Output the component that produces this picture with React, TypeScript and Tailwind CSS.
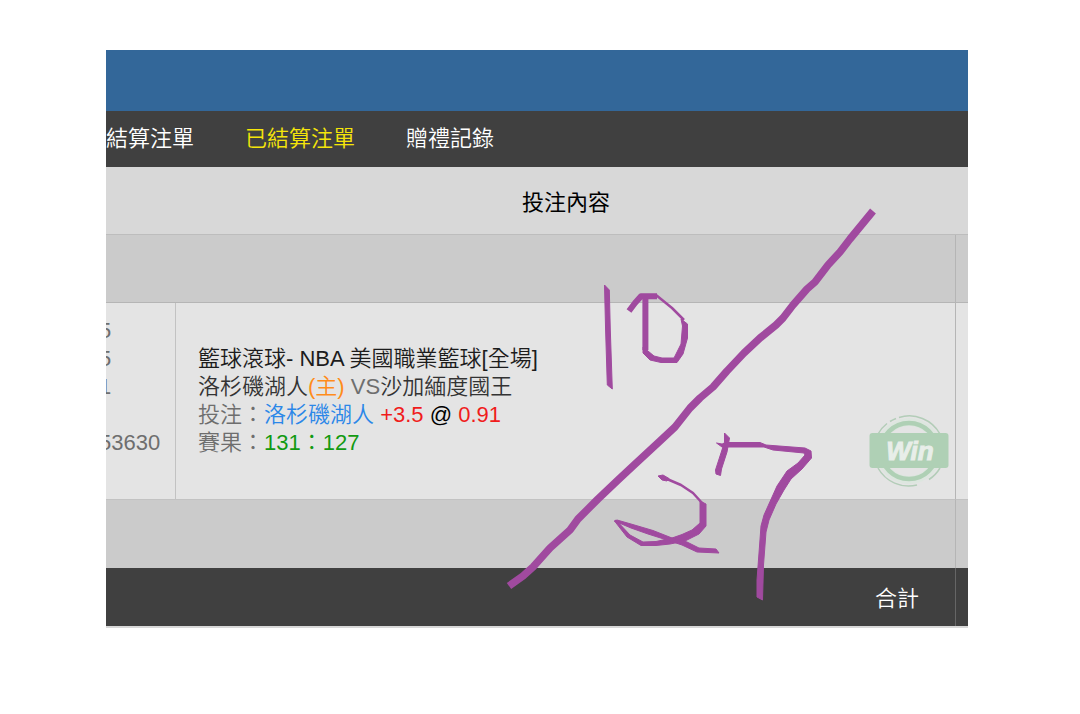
const tabs = [
  { label: "結算注單", active: false },
  { label: "已結算注單", active: true },
  { label: "贈禮記錄", active: false },
];

const orderLines = ["5", "5", "1", "", "53630", ""];

function WinBadge() {
  return (
    <svg
      className="absolute right-1.5 bottom-3 w-20 h-[72px]"
      viewBox="0 0 80 72"
      fill="none"
      role="img"
      aria-label="Win"
    >
      <circle cx="40" cy="36" r="33" fill="#dde6df" />
      <circle cx="40" cy="36" r="25" fill="#e4e4e4" />
      <path
        stroke="#b3cdb8"
        strokeWidth="1.5"
        d="M9 19A35 35 0 0 1 18 8.5M21 6.5A35 35 0 0 1 27 3.5M30 2.5A35 35 0 0 1 71 19M71 53A35 35 0 0 1 60 64.5M48 70A35 35 0 0 1 9 53"
      />
      <circle cx="40" cy="36" r="28" stroke="#afd0b5" strokeWidth="4.5" />
      <rect x="0.5" y="18" width="79" height="35" rx="3" fill="#afd0b5" />
      <text
        x="41"
        y="45"
        textAnchor="middle"
        fill="#e8eee9"
        stroke="#e8eee9"
        strokeWidth="1"
        className="font-['Liberation_Sans',sans-serif] text-[26px] font-bold italic"
      >
        Win
      </text>
    </svg>
  );
}

function PenMarks() {
  return (
    <svg
      className="pointer-events-none absolute inset-0 w-full h-full"
      viewBox="106 50 862 576"
      fill="none"
      stroke="#a04a9f"
      strokeLinejoin="round"
      aria-hidden="true"
    >
      {/* slash */}
      <path
        strokeWidth="7.5"
        d="M873 211L850 239L840 252L828 265L815 282L807 289L793 305L783 318L776 325L760 338L744 353L727 371L713 387L700 398L690 408L675 427L660 441L633 466L618 480L598 499L578 519L570 530L550 548L533 567L523 576L509 586"
      />
      {/* 10 */}
      <path fill="#a04a9f" d="M604.5 285L609.3 290L610.3 330L612.3 389L607.3 385L605.6 330Z" />
      <path strokeWidth="6" d="M629 311L635 303L641 296.3L657 296.3M645.4 297V350" />
      <path strokeWidth="2.5" d="M656 295L672 308L684 320" />
      <path
        fill="#a04a9f"
        d="M681 319L687.5 324L687.5 338L683 354L677 362.5L661 362.5L650 360L643 353L643 347L648 351L654 356L662 358L674 358L681 344L682.5 326Z"
      />
      {/* 2 */}
      <path fill="#a04a9f" d="M658 476L663 475L669 478.5L667 481L662 480Z" />
      <path strokeWidth="2.5" d="M667 479L681 485L693 493L703 504" />
      <path
        fill="#a04a9f"
        d="M700 501L706 504L706 526L699 534L685 541L670 544L656 545.5L641 545.5L627 537L614.5 521L616 520L630 535L643 542L656 541.5L672 538L682 534.5L692 530L700 523Z"
      />
      <path
        fill="#a04a9f"
        d="M614.5 521L617 520L631 524L653 530.5L672 538L687 542L699 548L716 549L719 553L697 552L682 545L667 540L648 534L631 528Z"
      />
      {/* 7 */}
      <path fill="#a04a9f" d="M724.5 433L729.5 438L727 452L721.5 469L720.5 475.5L716 474L715.5 470L721 453L724.5 442Z" />
      <path
        fill="#a04a9f"
        d="M716.5 443L722 444L727 442.5H760L766 445L805 448L811 451L811.5 458L802 469L791 479L784 490L776 504L769 520L766 532L763.5 565L762.5 600L757 597L757 580L761 526L764 515L777 486L787 471L798 463L805 455L804 453L773 450L764 447L722 447Z"
      />
    </svg>
  );
}

export default function App() {
  return (
    <div className="min-h-screen bg-white pt-[50px] pl-[106px] pr-[112px] font-['Liberation_Sans','Noto_Sans_CJK_TC',sans-serif] text-[22px] leading-7 font-[350]">
      <main className="relative overflow-hidden border-b-2 border-[#d8d8d8]">
        <header className="h-[61px] bg-[#336799]" />
        <nav className="flex h-14 items-center gap-[51px] bg-[#404040] text-white">
          {tabs.map((tab) => (
            <a
              key={tab.label}
              href="#"
              aria-current={tab.active ? "page" : undefined}
              className={tab.active ? "whitespace-nowrap text-[#f5e50a]" : "whitespace-nowrap"}
            >
              {tab.label}
            </a>
          ))}
        </nav>

        <table className="w-full table-fixed border-separate border-spacing-0 text-left">
          <colgroup>
            <col className="w-[70px]" />
            <col />
            <col className="w-3" />
          </colgroup>
          <thead>
            <tr className="h-[68px] bg-[#d8d8d8]">
              <td className="border-b border-[#bdbdbd]" />
              <th scope="col" className="border-b border-[#bdbdbd] px-0 pt-1 pb-0 text-center font-normal text-black">
                投注內容
              </th>
              <td className="border-b border-[#bdbdbd]" />
            </tr>
          </thead>
          <tbody>
            <tr className="h-[68px] bg-[#cbcbcb]">
              <td colSpan={2} className="border-r border-b border-[#b5b5b5]" />
              <td className="border-b border-[#b5b5b5]" />
            </tr>
            <tr className="h-[197px] bg-[#e4e4e4]">
              <td className="border-r border-b border-[#c2c2c2] p-0 text-[#6e6e6e]">
                <ul className="-ml-[7px]">
                  {orderLines.map((line, i) => (
                    <li key={i} className="h-7">
                      {line}
                    </li>
                  ))}
                </ul>
              </td>
              <td className="relative border-r border-b border-r-[#b5b5b5] border-b-[#c2c2c2] py-0 pr-0 pl-[22px]">
                <p className="text-[#1c1c1c]">籃球滾球- NBA 美國職業籃球[全場]</p>
                <p className="text-[#333333]">
                  洛杉磯湖人<span className="text-[#ff8c1a]">(主)</span> <span className="text-[#6e6e6e]">VS</span>
                  沙加緬度國王
                </p>
                <p className="text-[#6e6e6e]">
                  投注：<span className="text-[#2b87e8]">洛杉磯湖人</span>{" "}
                  <span className="text-[#f01c1c]">+3.5</span> <span className="text-black">@</span>{" "}
                  <span className="text-[#f01c1c]">0.91</span>
                </p>
                <p className="text-[#6e6e6e]">
                  賽果：<span className="text-[#129a12]">131：127</span>
                </p>
                <WinBadge />
              </td>
              <td className="border-b border-[#c2c2c2]" />
            </tr>
            <tr className="h-[68px] bg-[#cbcbcb]">
              <td colSpan={2} className="border-r border-[#b5b5b5]" />
              <td />
            </tr>
          </tbody>
          <tfoot>
            <tr className="h-[58px] bg-[#404040] text-white">
              <td colSpan={2} className="border-r border-[#666666] pt-1 pr-9 pb-0 pl-0 text-right">
                合計
              </td>
              <td />
            </tr>
          </tfoot>
        </table>

        <PenMarks />
      </main>
    </div>
  );
}
